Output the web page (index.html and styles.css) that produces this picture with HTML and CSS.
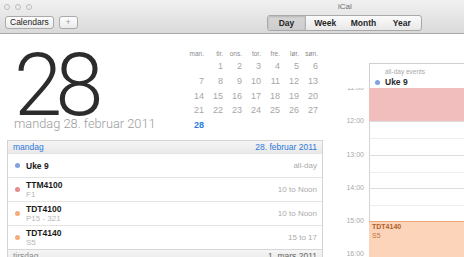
FILE: index.html
```html
<!DOCTYPE html>
<html>
<head>
<meta charset="utf-8">
<link rel="stylesheet" href="styles.css">
</head>
<body>
<div class="window">
  <header class="toolbar">
    <div class="titlebar">
      <div class="lights"><span></span><span></span><span></span></div>
      <div class="title">iCal</div>
    </div>
    <div class="tools">
      <button class="btn">Calendars</button>
      <button class="btn plus">+</button>
      <div class="seg">
        <span class="on">Day</span><span>Week</span><span>Month</span><span>Year</span>
      </div>
    </div>
  </header>
  <main class="main">
    <section class="left">
      <div class="top">
        <div class="bigdate">
          <div class="num">28</div>
          <div class="long">mandag 28. februar 2011</div>
        </div>
        <div class="mini">
          <span class="h">man.</span><span class="h">tir.</span><span class="h">ons.</span><span class="h">tor.</span><span class="h">fre.</span><span class="h">lør.</span><span class="h">søn.</span>
          <span class="d"></span><span class="d">1</span><span class="d">2</span><span class="d">3</span><span class="d">4</span><span class="d">5</span><span class="d">6</span>
          <span class="d">7</span><span class="d">8</span><span class="d">9</span><span class="d">10</span><span class="d">11</span><span class="d">12</span><span class="d">13</span>
          <span class="d">14</span><span class="d">15</span><span class="d">16</span><span class="d">17</span><span class="d">18</span><span class="d">19</span><span class="d">20</span>
          <span class="d">21</span><span class="d">22</span><span class="d">23</span><span class="d">24</span><span class="d">25</span><span class="d">26</span><span class="d">27</span>
          <span class="d today">28</span>
        </div>
      </div>
      <div class="list">
        <div class="lh"><span>mandag</span><span>28. februar 2011</span></div>
        <div class="row">
          <span class="dot blue"></span>
          <div class="ev"><div class="t">Uke 9</div></div>
          <span class="when">all-day</span>
        </div>
        <div class="row">
          <span class="dot red"></span>
          <div class="ev"><div class="t">TTM4100</div><div class="s">F1</div></div>
          <span class="when">10 to Noon</span>
        </div>
        <div class="row">
          <span class="dot orange"></span>
          <div class="ev"><div class="t">TDT4100</div><div class="s">P15 - 321</div></div>
          <span class="when">10 to Noon</span>
        </div>
        <div class="row">
          <span class="dot orange"></span>
          <div class="ev"><div class="t">TDT4140</div><div class="s">S5</div></div>
          <span class="when">15 to 17</span>
        </div>
        <div class="lh next"><span>tirsdag</span><span>1. mars 2011</span></div>
      </div>
    </section>
    <section class="day">
      <div class="allday">
        <div class="adl">all-day events</div>
        <div class="adrow"><span class="dot blue"></span><span>Uke 9</span></div>
      </div>
      <div class="timeline">
        <div class="hour"><span class="lbl">11:00</span><span class="grid"></span></div>
        <div class="hour"><span class="lbl">12:00</span><span class="grid"></span></div>
        <div class="hour"><span class="lbl">13:00</span><span class="grid"></span></div>
        <div class="hour"><span class="lbl">14:00</span><span class="grid"></span></div>
        <div class="hour"><span class="lbl">15:00</span><span class="grid"></span></div>
        <div class="hour"><span class="lbl">16:00</span><span class="grid"></span></div>
        <div class="event pink"></div>
        <div class="event peach">
          <div class="et">TDT4140</div>
          <div class="es">S5</div>
        </div>
      </div>
    </section>
  </main>
</div>
</body>
</html>
```

FILE: styles.css
```css
html, body {
  margin: 0;
  padding: 0;
}
body {
  width: 464px;
  height: 257px;
  overflow: hidden;
  background: #fff;
  font-family: "Liberation Sans", Arial, sans-serif;
}
.toolbar {
  height: 33px;
  border-bottom: 1px solid #a8a8a8;
  background: linear-gradient(#f1f1f1, #dadada);
}
.titlebar {
  display: flex;
  align-items: center;
  height: 13px;
}
.lights {
  display: flex;
  gap: 5px;
  padding-left: 4px;
}
.lights span {
  width: 6px;
  height: 6px;
  box-sizing: border-box;
  border-radius: 50%;
  border: 1px solid #bcbcbc;
  background: #ececec;
}
.title {
  margin-left: 306px;
  font-size: 8px;
  color: #6c6c6c;
  line-height: 13px;
}
.tools {
  display: flex;
  align-items: flex-start;
  padding: 2px 0 0 5px;
}
.btn {
  height: 13px;
  margin: 1px 0 0 0;
  box-sizing: border-box;
  border: 1px solid #aaaaaa;
  border-radius: 3px;
  background: linear-gradient(#fdfdfd, #ebebeb);
  font-family: "Liberation Sans", Arial, sans-serif;
  font-size: 8.5px;
  line-height: 11px;
  color: #1c1c1c;
  padding: 0 4px;
}
.plus {
  margin-left: 5px;
  width: 19px;
  padding: 0;
  color: #9a9a9a;
  font-size: 9px;
  text-align: center;
}
.seg {
  margin-left: auto;
  margin-right: 42px;
  width: 155px;
  height: 16px;
  box-sizing: border-box;
  display: flex;
  border: 1px solid #a9a9a9;
  border-radius: 3px;
  background: linear-gradient(#fbfbfb, #e8e8e8);
  overflow: hidden;
}
.seg span {
  flex: 1;
  text-align: center;
  font-weight: bold;
  font-size: 8.5px;
  line-height: 14px;
  color: #262626;
}
.seg .on {
  flex: 0 0 37px;
  background: linear-gradient(#d6d6d6, #cdcdcd);
  box-shadow: inset 0 1px 2px rgba(0,0,0,0.15);
  border-right: 1px solid #b4b4b4;
}
.main {
  display: flex;
  height: 223px;
}
.left {
  width: 340px;
  flex: none;
}
.top {
  display: flex;
  height: 106px;
}
.bigdate {
  width: 185px;
  flex: none;
  box-sizing: border-box;
  padding: 19.3px 0 0 14px;
}
.num {
  font-family: Roboto, "Liberation Sans", sans-serif;
  font-weight: 300;
  font-size: 87px;
  line-height: 64px;
  letter-spacing: -7px;
  color: #2c2c2c;
}
.long {
  margin: 0;
  font-family: Roboto, "Liberation Sans", sans-serif;
  font-weight: 300;
  font-size: 12.8px;
  line-height: 13px;
  color: #9c9c9c;
  white-space: nowrap;
}
.mini {
  padding-top: 15px;
  display: grid;
  grid-template-columns: repeat(7, 19px);
  grid-template-rows: 10px;
  grid-auto-rows: 14.8px;
  align-content: start;
}
.mini .h {
  font-size: 6.5px;
  line-height: 10px;
  color: #8a8a8a;
  text-align: right;
}
.mini .d {
  font-size: 9px;
  line-height: 14.8px;
  color: #a6a6a6;
  text-align: right;
}
.mini .today {
  color: #2a7be4;
  font-weight: bold;
}
.list {
  margin-left: 7px;
  width: 316px;
  box-sizing: border-box;
  border: 1px solid #d3d3d3;
  border-bottom: none;
}
.lh {
  display: flex;
  justify-content: space-between;
  height: 12px;
  line-height: 12px;
  padding: 0 5px 0 5px;
  font-size: 8.5px;
  color: #2e79dc;
  background: linear-gradient(#f5f5f5, #e9e9e9);
}
.lh.next {
  border-top: 1px solid #d6d6d6;
  color: #8c8c8c;
}
.lh.next span:last-child {
  color: #666;
}
.row {
  display: flex;
  align-items: center;
  height: 24px;
  box-sizing: border-box;
  border-top: 1px solid #e4e4e4;
  padding: 0 5px 0 7px;
}
.dot {
  width: 5px;
  height: 5px;
  border-radius: 50%;
  margin-right: 6px;
  flex: none;
}
.dot.blue { background: #7fa2e2; }
.dot.red { background: #e78b8b; }
.dot.orange { background: #f2ac7e; }
.ev {
  flex: 1;
}
.t {
  font-weight: bold;
  font-size: 8.5px;
  line-height: 10px;
  color: #1a1a1a;
}
.s {
  font-size: 8px;
  line-height: 10px;
  color: #b7b7b7;
}
.when {
  font-size: 8px;
  color: #ababab;
}
.day {
  flex: 1;
  display: flex;
  flex-direction: column;
  padding-top: 29px;
  min-width: 0;
}
.allday {
  margin-left: 29px;
  height: 25px;
  box-sizing: border-box;
  border-top: 1px solid #d0d0d0;
  border-left: 1px solid #d0d0d0;
  padding: 3px 0 0 15px;
}
.adl {
  font-size: 6.5px;
  line-height: 9px;
  color: #a8a8a8;
}
.adrow {
  display: flex;
  align-items: center;
  margin-left: -10px;
  font-weight: bold;
  font-size: 8.5px;
  line-height: 12px;
  color: #2a2a2a;
}
.adrow .dot {
  margin-right: 5px;
}
.timeline {
  position: relative;
  flex: 1;
  overflow: hidden;
}
.hour {
  display: flex;
  height: 33.25px;
}
.lbl {
  width: 29px;
  flex: none;
  box-sizing: border-box;
  padding-right: 5px;
  text-align: right;
  font-size: 7px;
  line-height: 8px;
  height: 8px;
  margin-top: -4px;
  color: #a9a9a9;
}
.grid {
  flex: 1;
  border-top: 1px solid #dddddd;
  border-left: 1px solid #d4d4d4;
  background: linear-gradient(#efefef, #efefef) 0 16px / 100% 1px no-repeat;
}
.event {
  position: absolute;
  left: 29px;
  right: 0;
}
.pink {
  top: 0;
  height: 33px;
  background: #f2bdbd;
}
.peach {
  top: 133px;
  height: 60px;
  box-sizing: border-box;
  background: #fbd4ba;
  border-top: 1px solid #eea77a;
  padding: 0 3px;
}
.et {
  font-weight: bold;
  font-size: 7px;
  line-height: 9px;
  color: #b1602a;
}
.es {
  font-size: 7px;
  line-height: 10px;
  color: #c27443;
}
```
